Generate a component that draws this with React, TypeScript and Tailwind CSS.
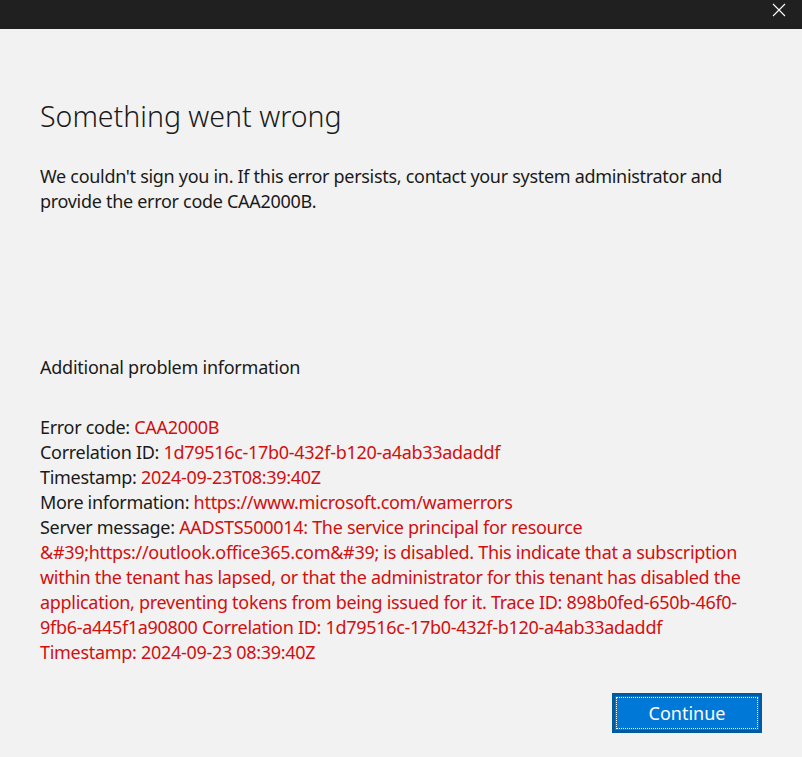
import React from 'react';

const red = 'text-[#d10f0f]';

const Row: React.FC<{ label: string; value: string }> = ({ label, value }) => (
  <div>
    {label} <span className={red}>{value}</span>
  </div>
);

export default function App() {
  return (
    <div
      className="w-[802px] h-[757px] flex flex-col bg-[#f2f2f2] text-[#1a1a1a] overflow-hidden"
      style={{ fontFamily: '"Noto Sans", "Open Sans", sans-serif' }}
    >
      {/* title bar */}
      <div className="h-[29px] bg-[#202020] flex justify-end shrink-0">
        <button className="w-[46px] h-[29px] flex items-start justify-center pt-[2px]" aria-label="Close">
          <svg width="14" height="14" viewBox="0 0 14 14" className="mt-[1px]">
            <path d="M1 1 L13 13 M13 1 L1 13" stroke="#ffffff" strokeWidth="1.1" fill="none" />
          </svg>
        </button>
      </div>

      <div className="flex-1 flex flex-col px-[40px] pt-[69px]">
        <h1 className="text-[28.5px] font-light leading-[36px] tracking-[0px]">Something went wrong</h1>

        <p className="mt-[30px] text-[18px] leading-[25px] tracking-[-0.3px]">
          We couldn't sign you in. If this error persists, contact your system administrator and
          <br />
          provide the error code CAA2000B.
        </p>

        <div className="mt-[141px] text-[18px] leading-[25px] tracking-[-0.25px]">Additional problem information</div>

        <div className="mt-[35px] text-[18px] leading-[25px] tracking-[-0.3px]">
          <Row label="Error code:" value="CAA2000B" />
          <Row label="Correlation ID:" value="1d79516c-17b0-432f-b120-a4ab33adaddf" />
          <Row label="Timestamp:" value="2024-09-23T08:39:40Z" />
          <Row label="More information:" value="https://www.microsoft.com/wamerrors" />
          <div>
            Server message:{' '}
            <span className={red}>
              AADSTS500014: The service principal for resource
              <br />
              &amp;#39;https://outlook.office365.com&amp;#39; is disabled. This indicate that a subscription
              <br />
              within the tenant has lapsed, or that the administrator for this tenant has disabled the
              <br />
              application, preventing tokens from being issued for it. Trace ID: 898b0fed-650b-46f0-
              <br />
              9fb6-a445f1a90800 Correlation ID: 1d79516c-17b0-432f-b120-a4ab33adaddf
              <br />
              Timestamp: 2024-09-23 08:39:40Z
            </span>
          </div>
        </div>

        <div className="mt-auto mb-[24px] flex justify-end">
          <button className="w-[150px] h-[40px] bg-[#0078d7] border-[3px] border-[#005a9e] p-[1px]">
            <span className="w-full h-full flex items-center justify-center border border-dotted border-white text-white text-[18px]">
              Continue
            </span>
          </button>
        </div>
      </div>
    </div>
  );
}
